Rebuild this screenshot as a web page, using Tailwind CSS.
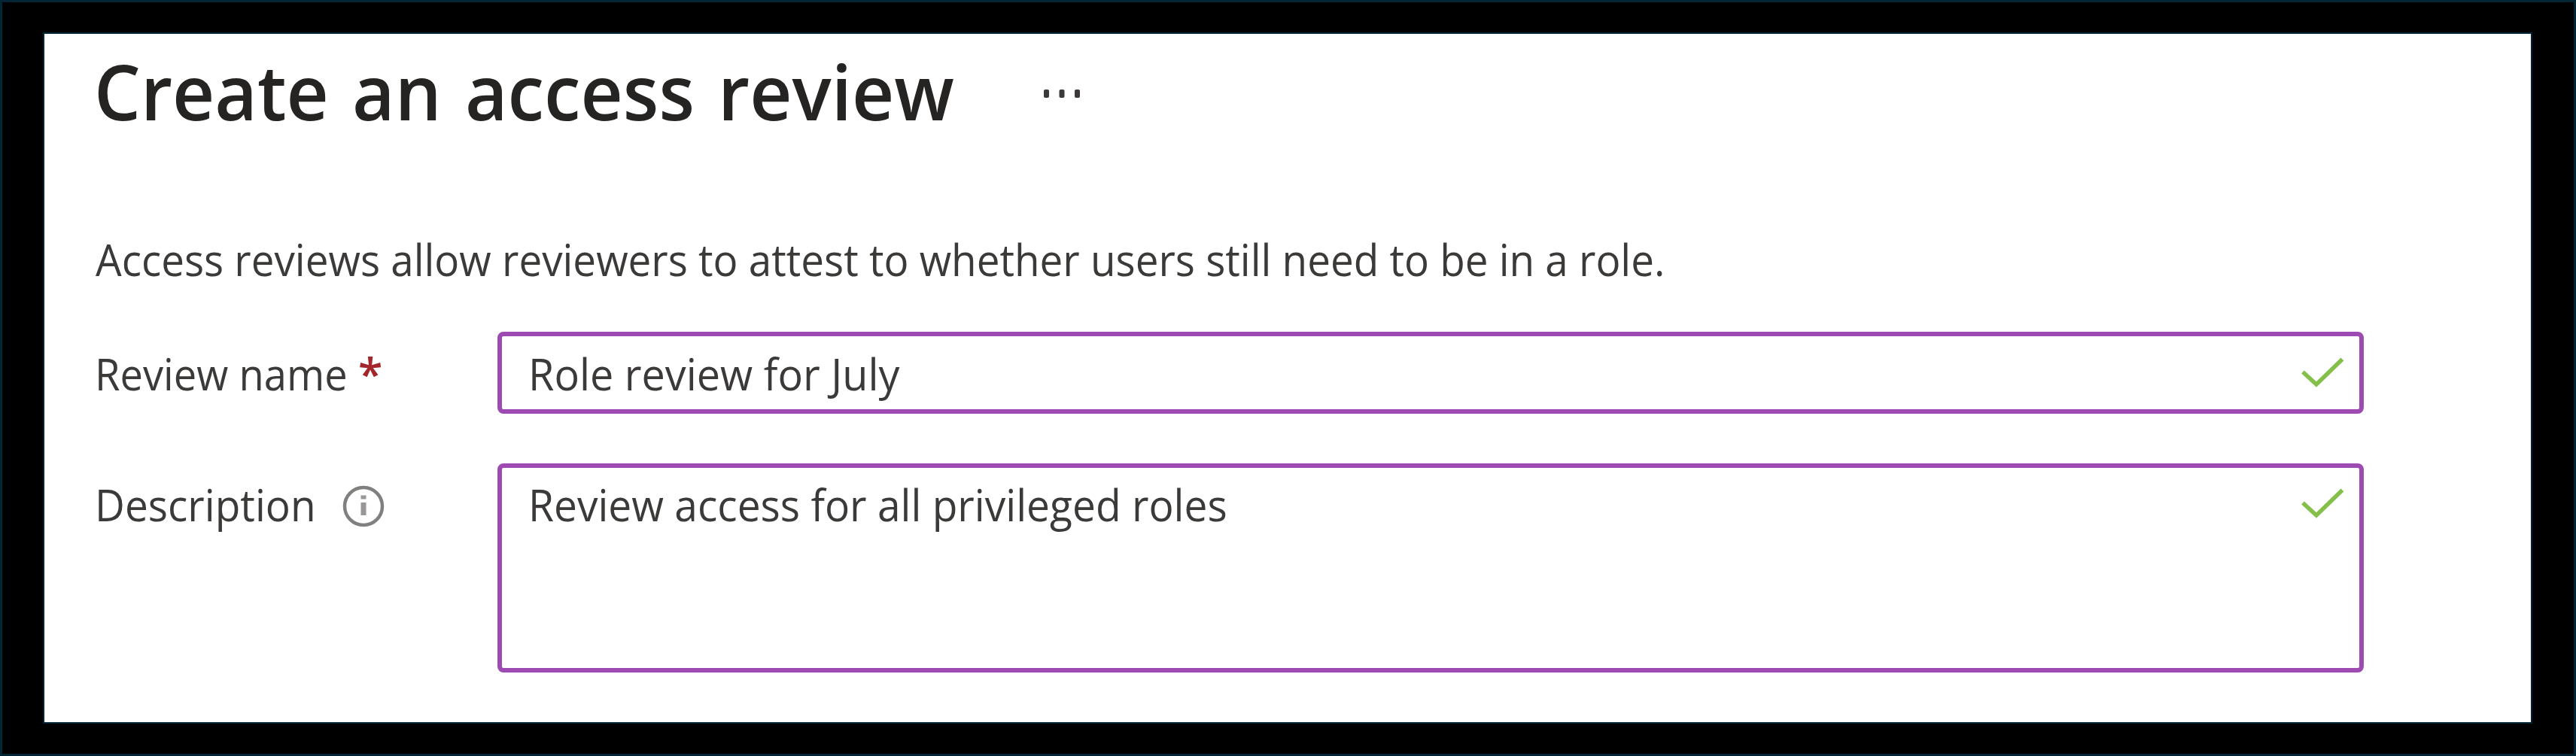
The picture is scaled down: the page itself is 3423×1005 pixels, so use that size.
<!DOCTYPE html>
<html lang="en">
<head>
<meta charset="utf-8">
<title>Create an access review</title>
<script src="https://cdn.jsdelivr.net/npm/@tailwindcss/browser@4"></script>
</head>
<body class="h-[1005px] w-[3423px] overflow-hidden bg-black font-['Open_Sans',sans-serif] text-[#3b3a39]">
<div class="flex h-full w-full border-3 border-[#022535] pt-[40px] pl-[54px]">
  <main class="h-[919px] w-[3308px] border-2 border-[#022535] bg-white pl-[66px]">
    <header class="mt-[21px] flex h-[110px] items-start">
      <h1 class="w-[1262px] origin-left scale-x-[0.967] text-[101px] leading-[110px] font-semibold whitespace-nowrap text-[#252423] [word-spacing:6px]">Create an access review</h1>
      <svg class="mt-[53px] h-[11px] w-[48px]" viewBox="0 0 48 11" fill="#3b3a39"><rect width="7" height="11" rx="2"/><rect x="20.500" width="7" height="11" rx="2"/><rect x="41" width="7" height="11" rx="2"/></svg>
    </header>
    <p class="mt-[138px] ml-[2px] h-[60px] origin-left scale-x-[0.9286] text-[59px] leading-[60px] whitespace-nowrap">Access reviews allow reviewers to attest to whether users still need to be in a role.</p>

    <form class="mt-[67px] flex flex-col gap-[66px]">
      <div class="flex">
        <label class="flex w-[536px] pt-[25px] pl-px text-[59px] leading-[60px] whitespace-nowrap"><span class="w-[350px] origin-left scale-x-[0.92]">Review name</span><span class="font-semibold text-[#a4262c]">*</span></label>
        <div class="flex h-[109px] w-[2480px] justify-between rounded-[8px] border-[6px] border-[#9d4bb2] pt-[19px] pr-[20px] pl-[35px]">
          <span class="origin-left scale-x-[0.9446] text-[59px] leading-[60px] whitespace-nowrap">Role review for July</span>
          <svg class="mt-[8px] h-[44px] w-[58px]" viewBox="0 0 58 44" fill="none" stroke="#84bf4a" stroke-width="5.500"><path d="M3 20.500 21 37 55.500 3.500"/></svg>
        </div>
      </div>
      <div class="flex">
        <label class="flex w-[536px] pt-[24px] pl-px text-[59px] leading-[60px] whitespace-nowrap"><span class="w-[328px] origin-left scale-x-[0.932]">Description</span>
          <svg class="mt-[4px] h-[58px] w-[58px]" viewBox="0 0 58 58" fill="none"><circle cx="29" cy="29" r="25" stroke="#80807e" stroke-width="4.500"/><path d="M29 14.500v5M29 24v17" stroke="#9a9896" stroke-width="7"/></svg>
        </label>
        <div class="flex h-[278px] w-[2480px] items-start justify-between rounded-[8px] border-[6px] border-[#9d4bb2] pt-[18px] pr-[20px] pl-[35px]">
          <span class="origin-left scale-x-[0.9337] text-[59px] leading-[60px] whitespace-nowrap">Review access for all privileged roles</span>
          <svg class="mt-[8px] h-[44px] w-[58px]" viewBox="0 0 58 44" fill="none" stroke="#84bf4a" stroke-width="5.500"><path d="M3 20.500 21 37 55.500 3.500"/></svg>
        </div>
      </div>
    </form>
  </main>
</div>
</body>
</html>
